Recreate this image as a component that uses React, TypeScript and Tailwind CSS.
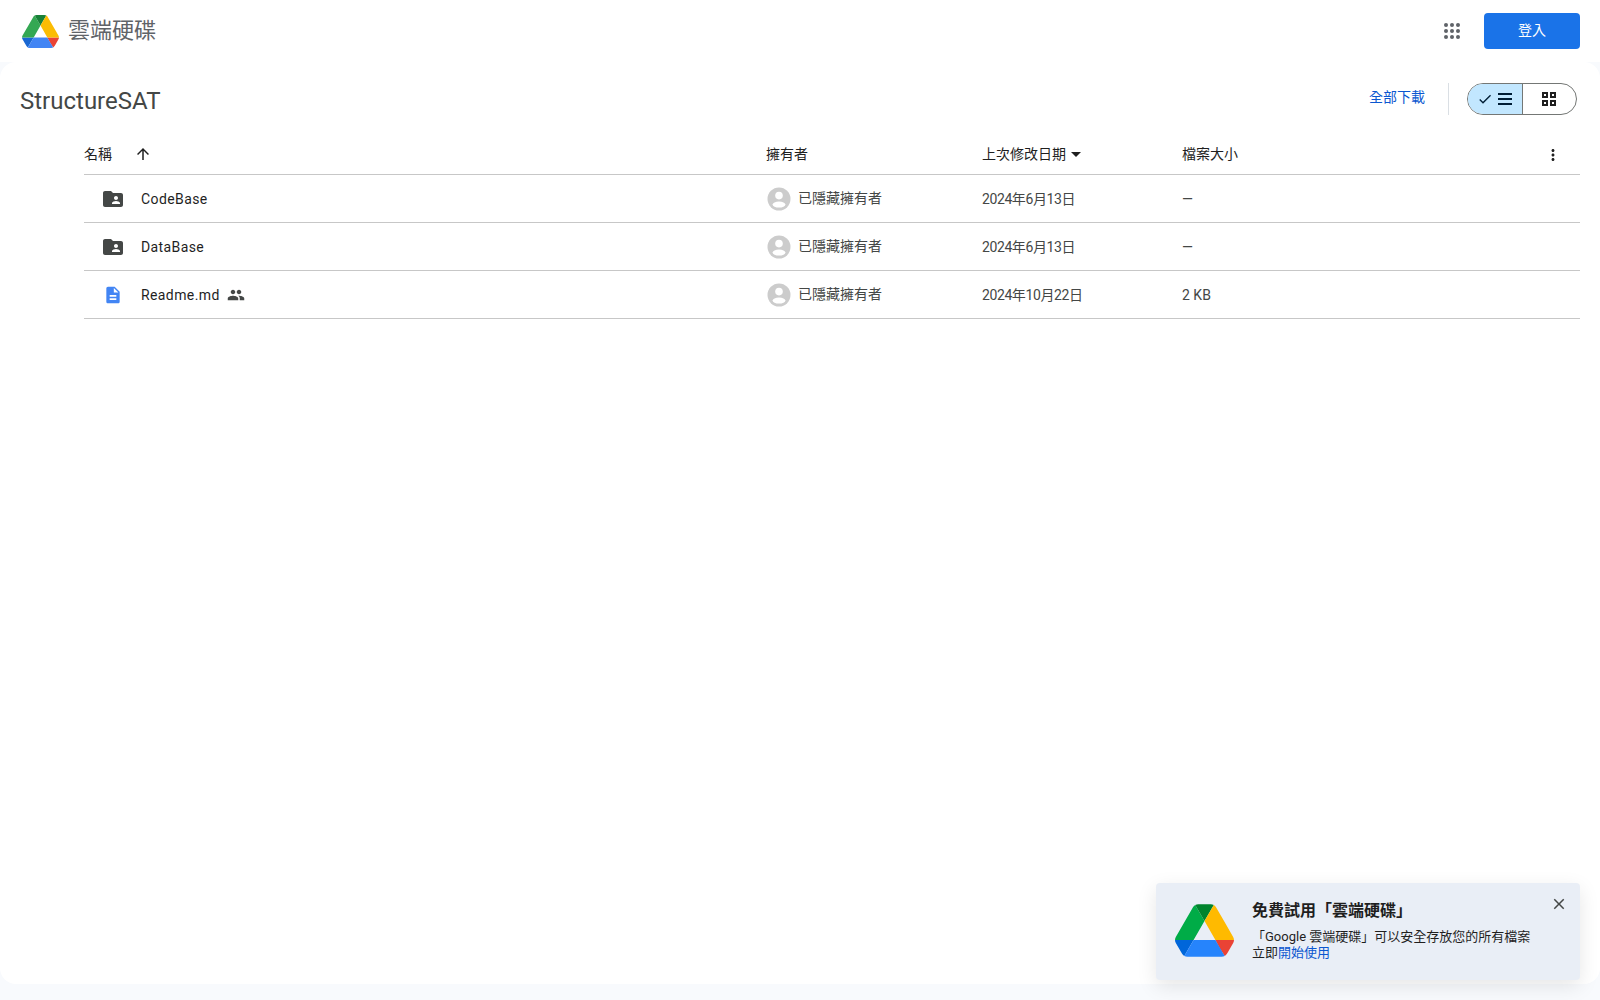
const files = [
  { name: "CodeBase", kind: "folder", date: "2024年6月13日", size: "—" },
  { name: "DataBase", kind: "folder", date: "2024年6月13日", size: "—" },
  { name: "Readme.md", kind: "doc", date: "2024年10月22日", size: "2 KB" },
]

function DriveLogo({ className, colors }: { className: string; colors: string[] }) {
  return (
    <svg viewBox="0 0 87.3 78" className={className}>
      <path d="m6.6 66.85 3.85 6.65c.8 1.4 1.95 2.5 3.3 3.3l13.75-23.8h-27.5c0 1.55.4 3.1 1.2 4.5z" fill={colors[0]} />
      <path d="m43.65 25-13.75-23.8c-1.35.8-2.5 1.9-3.3 3.3l-25.4 44a9.06 9.06 0 0 0 -1.2 4.5h27.5z" fill={colors[1]} />
      <path d="m73.55 76.8c1.35-.8 2.5-1.9 3.3-3.3l1.6-2.75 7.65-13.25c.8-1.4 1.2-2.95 1.2-4.5h-27.502l5.852 11.5z" fill={colors[2]} />
      <path d="m43.65 25 13.75-23.8c-1.35-.8-2.9-1.2-4.5-1.2h-18.5c-1.6 0-3.15.45-4.5 1.2z" fill={colors[3]} />
      <path d="m59.8 53h-32.3l-13.75 23.8c1.35.8 2.9 1.2 4.5 1.2h50.8c1.6 0 3.15-.45 4.5-1.2z" fill={colors[4]} />
      <path d="m73.4 26.5-12.7-22c-.8-1.4-1.95-2.5-3.3-3.3l-13.75 23.8 16.15 28h27.45c0-1.55-.4-3.1-1.2-4.5z" fill={colors[5]} />
    </svg>
  )
}

function FolderIcon() {
  return (
    <svg viewBox="0 0 24 24" className="h-6 w-6 fill-[#444746]">
      <path d="M20 6h-8l-2-2H4c-1.1 0-1.99.9-1.99 2L2 18c0 1.1.9 2 2 2h16c1.1 0 2-.9 2-2V8c0-1.1-.9-2-2-2zm-5 3c1.1 0 2 .9 2 2s-.9 2-2 2-2-.9-2-2 .9-2 2-2zm4 8h-8v-1c0-1.33 2.67-2 4-2s4 .67 4 2v1z" />
    </svg>
  )
}

function DocIcon() {
  return (
    <svg viewBox="0 0 24 24" className="h-5 w-5 fill-[#4285f4]">
      <path d="M14 2H6c-1.1 0-2 .9-2 2v16c0 1.1.9 2 2 2h12c1.1 0 2-.9 2-2V8l-6-6zm2 16H8v-2h8v2zm0-4H8v-2h8v2zm-3-5V3.5L18.5 9H13z" />
    </svg>
  )
}

function PeopleIcon() {
  return (
    <svg viewBox="0 0 24 24" className="h-[18px] w-[18px] fill-[#444746]">
      <path d="M16 11c1.66 0 2.99-1.34 2.99-3S17.66 5 16 5c-1.66 0-3 1.34-3 3s1.34 3 3 3zm-8 0c1.66 0 2.99-1.34 2.99-3S9.66 5 8 5C6.34 5 5 6.34 5 8s1.34 3 3 3zm0 2c-2.33 0-7 1.17-7 3.5V19h14v-2.5c0-2.33-4.67-3.5-7-3.5zm8 0c-.29 0-.62.02-.97.05 1.16.84 1.97 1.97 1.97 3.45V19h6v-2.5c0-2.33-4.67-3.5-7-3.5z" />
    </svg>
  )
}

function Avatar() {
  return (
    <svg viewBox="0 0 24 24" className="h-6 w-6">
      <circle cx="12" cy="12" r="11.5" fill="#cccccc" />
      <circle cx="12" cy="8.6" r="3.8" fill="#ffffff" />
      <ellipse cx="12" cy="17.6" rx="6.4" ry="3" fill="#ffffff" />
    </svg>
  )
}

export default function App() {
  return (
    <div className="relative flex h-screen flex-col overflow-hidden bg-[#f8fafd] font-['Roboto','Noto_Sans_CJK_TC',sans-serif]">
      <header className="flex h-[62px] shrink-0 items-center justify-between bg-white pl-[22px] pr-5">
        <div className="flex items-center gap-[9px]">
          <DriveLogo
            className="h-[33px] w-[37px]"
            colors={["#1967d2", "#34a853", "#ea4335", "#188038", "#4285f4", "#fbbc04"]}
          />
          <span className="text-[22px] leading-none text-[#5f6368]">雲端硬碟</span>
        </div>
        <div className="flex items-center gap-6">
          <svg viewBox="0 0 16 16" className="h-4 w-4 fill-[#5f6368]">
            {[2, 8, 14].map((y) =>
              [2, 8, 14].map((x) => <circle key={`${x}-${y}`} cx={x} cy={y} r="2" />)
            )}
          </svg>
          <button className="h-9 w-24 rounded bg-[#1a73e8] pb-0.5 text-sm text-white">登入</button>
        </div>
      </header>

      <main className="mb-4 flex-1 rounded-2xl bg-white">
        <div className="flex h-[77px] items-start justify-between pl-5 pr-[23px] pt-[21px]">
          <h1 className="text-[24px] leading-9 text-[#444746]">StructureSAT</h1>
          <div className="flex items-center">
            <a className="pb-1 text-sm text-[#0b57d0]">全部下載</a>
            <div className="ml-[23px] mr-[18px] h-8 w-px bg-[#dadfe4]" />
            <div className="flex h-8 w-[110px] overflow-hidden rounded-full border border-[#747775]">
              <div className="flex w-[55px] items-center justify-center gap-[5px] border-r border-[#747775] bg-[#c2e7ff] pr-px">
                <svg viewBox="0 0 24 24" className="h-4 w-4 fill-[#001d35]">
                  <path d="M9 16.2 4.8 12l-1.4 1.4L9 19 21 7l-1.4-1.4z" />
                </svg>
                <svg viewBox="0 0 14 14" className="h-3.5 w-3.5 fill-[#001d35]">
                  <path d="M0 1h14v2H0zM0 6h14v2H0zM0 11h14v2H0z" />
                </svg>
              </div>
              <div className="flex flex-1 items-center justify-center pr-0.5">
                <svg viewBox="0 0 14 14" className="h-3.5 w-3.5 fill-[#1f1f1f]">
                  <path
                    fillRule="evenodd"
                    d="M0 0h6v6H0zM2 2v2h2V2zM8 0h6v6H8zM10 2v2h2V2zM0 8h6v6H0zM2 10v2h2v-2zM8 8h6v6H8zM10 10v2h2v-2z"
                  />
                </svg>
              </div>
            </div>
          </div>
        </div>

        <div className="ml-[84px] mr-5">
          <div className="flex h-9 items-center border-b border-[#c7c7c7] pb-[5px] text-sm text-[#1f1f1f]">
            <div className="flex w-[682px] items-center gap-[22px]">
              <span>名稱</span>
              <svg viewBox="0 0 24 24" className="h-[18px] w-[18px] fill-[#1f1f1f]">
                <path d="M4 12l1.41 1.41L11 7.83V20h2V7.83l5.58 5.59L20 12l-8-8-8 8z" />
              </svg>
            </div>
            <div className="w-[216px]">擁有者</div>
            <div className="flex w-[200px] items-center">
              <span>上次修改日期</span>
              <svg viewBox="0 0 24 24" className="-ml-0.5 h-6 w-6 fill-[#1f1f1f]">
                <path d="M7 10l5 5 5-5z" />
              </svg>
            </div>
            <div className="flex-1">檔案大小</div>
            <svg viewBox="0 0 24 24" className="mr-[18px] mt-0.5 h-[18px] w-[18px] fill-[#1f1f1f]">
              <path d="M12 8c1.1 0 2-.9 2-2s-.9-2-2-2-2 .9-2 2 .9 2 2 2zm0 2c-1.1 0-2 .9-2 2s.9 2 2 2 2-.9 2-2-.9-2-2-2zm0 6c-1.1 0-2 .9-2 2s.9 2 2 2 2-.9 2-2-.9-2-2-2z" />
            </svg>
          </div>

          {files.map((file) => (
            <div key={file.name} className="flex h-12 items-center border-b border-[#c7c7c7] text-sm text-[#444746]">
              <div className="flex w-[682px] items-center">
                <div className="ml-[17px] flex w-10 justify-start">
                  {file.kind === "folder" ? <FolderIcon /> : <span className="ml-0.5"><DocIcon /></span>}
                </div>
                <span className="tracking-[0.4px] text-[#1f1f1f]">{file.name}</span>
                {file.kind === "doc" && (
                  <span className="ml-[7px]"><PeopleIcon /></span>
                )}
              </div>
              <div className="flex w-[216px] items-center gap-[7px] pl-px">
                <Avatar />
                <span className="pb-px">已隱藏擁有者</span>
              </div>
              <div className="w-[200px] tracking-[-0.4px]">{file.date}</div>
              <div>{file.size}</div>
            </div>
          ))}
        </div>
      </main>

      <div className="absolute bottom-5 right-5 flex h-[97px] w-[424px] rounded bg-[#e9eef6] shadow-[0_6px_20px_rgba(0,0,0,0.1)]">
        <DriveLogo
          className="ml-[19px] mt-[21px] h-[53px] w-[59px]"
          colors={["#0066da", "#00ac47", "#ea4335", "#00832d", "#2684fc", "#ffba00"]}
        />
        <div className="ml-[18px] mt-4 flex-1">
          <div className="text-base font-bold leading-6 text-[#1f1f1f]">免費試用「雲端硬碟」</div>
          <p className="mt-[6px] text-[13px] leading-4 text-[#1f1f1f]">
            「Google 雲端硬碟」可以安全存放您的所有檔案
            <br />
            立即<a className="text-[#0b57d0]">開始使用</a>
          </p>
        </div>
        <svg viewBox="0 0 24 24" className="mr-3 mt-3 h-[18px] w-[18px] fill-[#444746]">
          <path d="M19 6.41 17.59 5 12 10.59 6.41 5 5 6.41 10.59 12 5 17.59 6.41 19 12 13.41 17.59 19 19 17.59 13.41 12z" />
        </svg>
      </div>
    </div>
  )
}
